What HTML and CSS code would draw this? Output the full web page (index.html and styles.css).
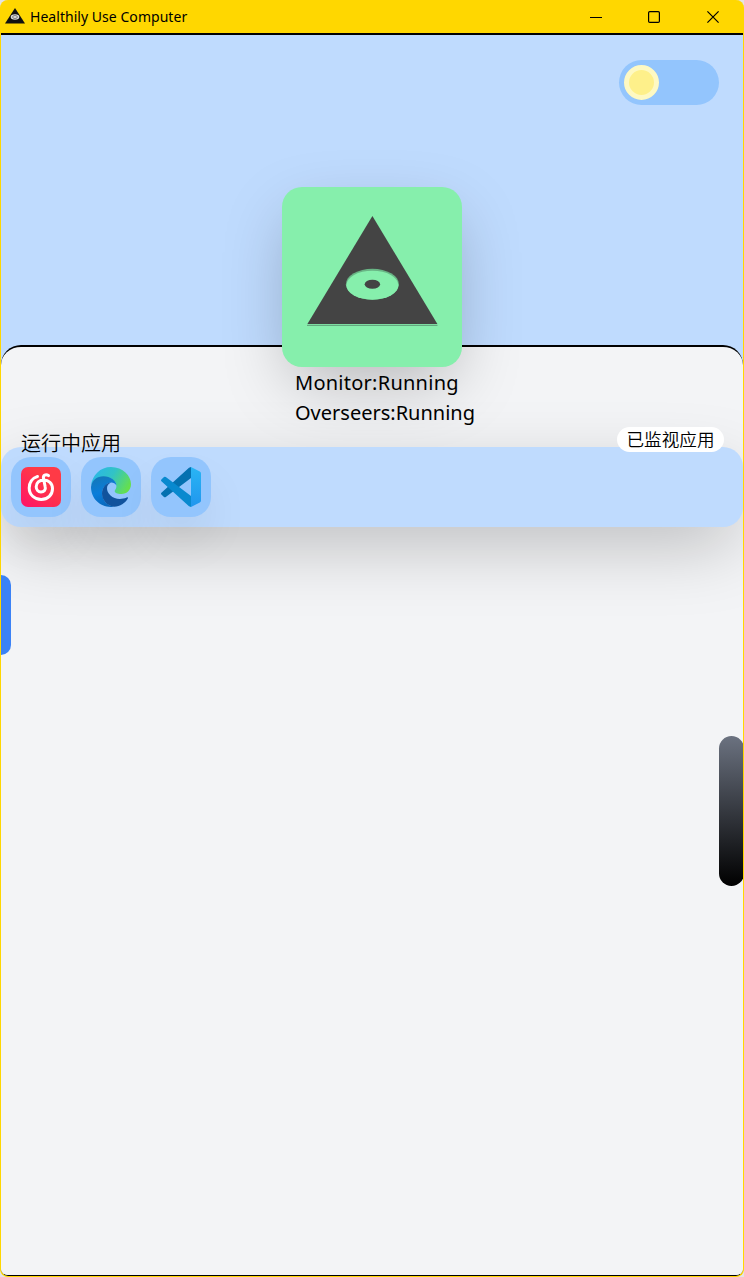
FILE: index.html
```html
<!DOCTYPE html>
<html lang="zh-CN">
<head>
<meta charset="utf-8">
<title>Healthily Use Computer</title>
<link rel="stylesheet" href="styles.css">
</head>
<body>
<div class="window">
  <header class="titlebar">
    <svg class="app-icon" viewBox="0 0 20 16" width="20" height="16"><path d="M10 0 20 15.500H0Z" fill="#111"/><ellipse cx="10" cy="9" rx="4.300" ry="2.700" fill="#ddd"/><ellipse cx="10" cy="9" rx="2.400" ry="1.500" fill="none" stroke="#555" stroke-width=".7"/></svg>
    <span class="title">Healthily Use Computer</span>
    <div class="controls">
      <svg viewBox="0 0 12 12" width="12" height="12"><path d="M0 6.500H12" stroke="#000" stroke-width="1"/></svg>
      <svg viewBox="0 0 12 12" width="12" height="12"><rect x=".6" y=".6" width="10.800" height="10.800" rx="1.200" fill="none" stroke="#000" stroke-width="1.200"/></svg>
      <svg viewBox="0 0 12 12" width="12" height="12"><path d="M.4.4 11.600 11.600M11.600.4.4 11.600" stroke="#000" stroke-width="1.200"/></svg>
    </div>
  </header>
  <main class="content">
    <section class="hero">
      <div class="switch"><div class="knob"></div></div>
    </section>
    <section class="panel">
      <div class="logo-card">
        <svg viewBox="0 0 180 180" width="180" height="180">
          <path d="M25 138.400H155.500" stroke="#64a980" stroke-width="1.200"/>
          <path d="M90.400 29 155.400 137H25.400Z" fill="#444"/>
          <ellipse cx="90.400" cy="97.200" rx="26.500" ry="15.500" fill="#69b585"/>
          <ellipse cx="90.400" cy="98.200" rx="26" ry="14.500" fill="#86efac"/>
          <ellipse cx="90.400" cy="97.300" rx="7.700" ry="4.500" fill="#444"/>
        </svg>
      </div>
      <div class="status">
        <div class="monitor">Monitor:Running</div>
        <div class="overseers">Overseers:Running</div>
      </div>
      <div class="apps">
        <span class="label">运行中应用</span>
        <span class="pill">已监视应用</span>
        <div class="tile">
          <svg viewBox="0 0 40 40" width="40" height="40">
            <defs><linearGradient id="music" x1="0" y1="1" x2=".6" y2=".3"><stop stop-color="#ff1268"/><stop offset="1" stop-color="#ff3a46"/></linearGradient></defs>
            <rect width="40" height="40" rx="7" fill="url(#music)"/>
            <path d="M16.500 9.500C11 11 8.200 16 8.200 21c0 6.700 5.300 11.500 12 11.500s11.300-4.800 11.300-10.800c0-5.200-4-8.700-8.500-8.700-4.800 0-7.800 3-7.800 6.800 0 3.100 2.100 5.200 4.700 5.200 3.200 0 5.100-2.300 4.300-5.200L22.500 11.500c-.7-3.500 2.300-4.700 5-2.900" fill="none" stroke="#fff" stroke-width="3" stroke-linecap="round"/>
          </svg>
        </div>
        <div class="tile">
          <svg viewBox="0 0 40 40" width="40" height="40">
            <defs>
              <linearGradient id="edgeTop" x1="0" y1=".2" x2="1" y2=".6"><stop stop-color="#29b6ea"/><stop offset=".5" stop-color="#32c3c5"/><stop offset="1" stop-color="#66e04e"/></linearGradient>
              <linearGradient id="edgeLeft" x1=".3" y1="0" x2=".6" y2="1"><stop stop-color="#1577b8"/><stop offset=".5" stop-color="#0a7dda"/><stop offset="1" stop-color="#0867bb"/></linearGradient>
            </defs>
            <path d="M0 19C1 8 9.500 0 20 0c12 0 20 9 20 17 0 6-4 10-9.700 10-4 0-6.600-1.300-6.600-2.800 0-1.300 1.700-2 1.700-5.200C25.400 14 20 10 13.500 10 7 10 2 13 0 19Z" fill="url(#edgeTop)"/>
            <path d="M0 20C1 13 6 9.300 12.500 9.300c7 0 12.800 4.400 12.900 9.200-1-1.900-3-3-5.200-3-4.300 0-9 5-9 10.600C11.200 33 15.500 38.500 23 39.700 10 41.500 0 32 0 20Z" fill="url(#edgeLeft)"/>
            <path d="M20 15.500c-4.800 0-9 5.200-9 11C11 33 16 39 23.200 39.700c6 0 11-3.600 13.600-8.100.5-1-.3-1.500-1.100-1.100C25 35 15.700 28 16 21c.1-2.500 1.500-4.600 4-5.500Z" fill="#11539d"/>
          </svg>
        </div>
        <div class="tile">
          <svg viewBox="0 0 40 40" width="40" height="40">
            <defs><linearGradient id="codeRight" x1="0" y1="0" x2="0" y2="1"><stop stop-color="#29b5f4"/><stop offset="1" stop-color="#2196ee"/></linearGradient></defs>
            <path d="M30 0v11L4.800 30q-.9.700-1.800 0L.4 27.600q-.8-.9 0-1.800L28 .7Z" fill="#0571b0"/>
            <path d="M30 40V29L4.800 10q-.9-.7-1.800 0L.4 12.400q-.8.900 0 1.800L28 39.300Z" fill="#0889cf"/>
            <path d="M30 .1 38.800 4.500Q40 5.100 40 6.400V33.600Q40 34.900 38.800 35.500L30 39.900Z" fill="url(#codeRight)"/>
          </svg>
        </div>
      </div>
      <div class="left-handle"></div>
      <div class="scroll-handle"></div>
    </section>
  </main>
</div>
</body>
</html>
```
FILE: styles.css
```css
* { box-sizing: border-box; }
body {
  margin: 0;
  background: #e4e4e4;
  color: #000;
  font-family: "Noto Sans", "Noto Sans CJK SC", sans-serif;
}
.window {
  display: flex;
  flex-direction: column;
  width: 744px;
  height: 1277px;
  overflow: hidden;
  background: #ffd700;
  border: 1px solid #ffd700;
  border-top: 0;
  border-radius: 8px;
}
.titlebar {
  display: flex;
  flex: none;
  align-items: center;
  height: 35px;
  padding: 0 24px 0 4px;
  border-bottom: 2px solid #000;
}
.app-icon { flex: none; margin-top: -2px; }
.title {
  margin-left: 5px;
  font-size: 14px;
  letter-spacing: 0.04px;
  white-space: nowrap;
}
.controls { display: flex; gap: 47px; margin-left: auto; }
.controls svg { display: block; }
.controls svg:first-child { margin-right: -1px; }
.content {
  display: flex;
  flex: 1;
  flex-direction: column;
  overflow: hidden;
  background: #bfdbfe;
  border-bottom: 1px solid #000;
  border-radius: 0 0 7px 7px;
}
.hero {
  display: flex;
  flex: none;
  justify-content: flex-end;
  height: 310px;
  padding: 25px 24px 0 0;
}
.switch {
  width: 100px;
  height: 45px;
  padding: 5px;
  background: #93c5fd;
  border-radius: 23px;
}
.knob {
  width: 35px;
  height: 35px;
  background: #fef08a;
  border: 5px solid #fef9c3;
  border-radius: 50%;
}
.panel {
  position: relative;
  flex: 1;
  background: #f3f4f6;
  border-top: 2px solid #000;
  border-radius: 20px 20px 0 0;
}
.logo-card {
  position: absolute;
  top: -160px;
  left: 281.400px;
  width: 180px;
  height: 180px;
  background: #86efac;
  border-radius: 20px;
  box-shadow: 0 23px 66px -9px rgba(0, 0, 0, .25);
}
.logo-card svg { display: block; }
.status {
  position: relative;
  height: 100px;
  padding: 21px 0 0 294px;
  font-size: 20px;
  line-height: 30px;
}
.monitor { letter-spacing: 0.25px; }
.apps {
  position: relative;
  display: flex;
  gap: 10px;
  height: 80px;
  padding: 10px;
  background: #bfdbfe;
  border-radius: 20px;
  box-shadow: 0 22px 70px -7px rgba(0, 0, 0, .25);
}
.label, .pill {
  position: absolute;
  z-index: 1;
  font-family: "Noto Sans CJK SC", sans-serif;
  font-weight: 350;
  white-space: nowrap;
}
.label { top: -19px; left: 20px; font-size: 20px; line-height: 30px; }
.pill {
  top: -20px;
  right: 19px;
  width: 107px;
  height: 25px;
  background: #fff;
  border-radius: 13px;
  font-size: 17.600px;
  line-height: 24px;
  text-align: center;
}
.tile {
  width: 60px;
  height: 60px;
  padding: 10px;
  background: #93c5fd;
  border-radius: 20px;
  box-shadow: 0 25px 50px -10px rgba(0, 0, 0, .13);
}
.tile svg { display: block; }
.left-handle {
  position: relative;
  width: 10px;
  height: 80px;
  margin-top: 48px;
  background: #3b82f6;
  border-radius: 0 10px 10px 0;
}
.scroll-handle {
  width: 25px;
  height: 150px;
  margin: 81px -1px 0 auto;
  background: linear-gradient(#6b7280, #000);
  border-radius: 13px;
}
```
